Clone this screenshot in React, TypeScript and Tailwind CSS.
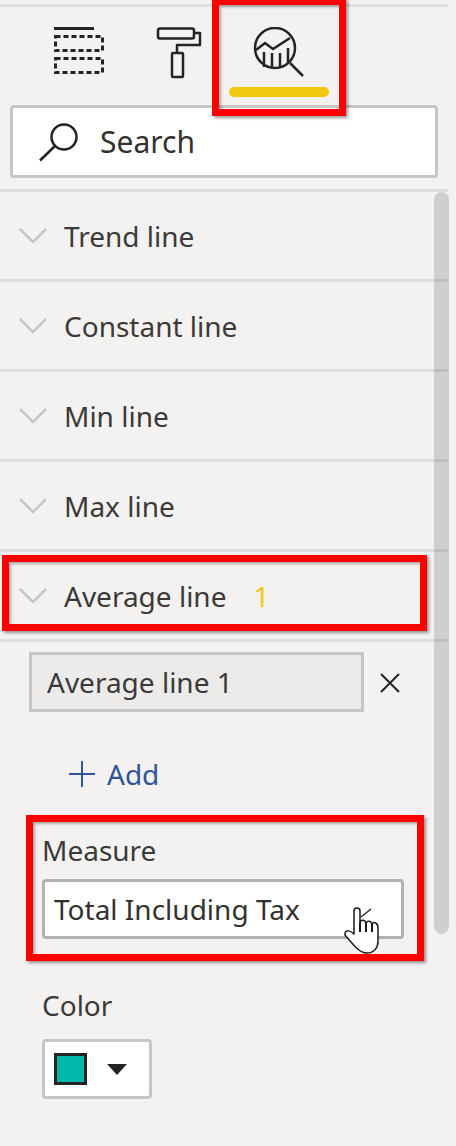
const font = { fontFamily: '"Noto Sans", "Open Sans", sans-serif' };

function Chevron() {
  return (
    <svg width="30" height="18" viewBox="0 0 30 18" fill="none" stroke="#c8c6c4" strokeWidth="2.5" className="shrink-0">
      <path d="M2 2 L15 15 L28 2" />
    </svg>
  );
}

function Row({ label, badge }: { label: string; badge?: string }) {
  return (
    <div className="h-[90px] flex items-center pl-[18px] border-b-[3px] border-[#e1dfdd] w-[448px]">
      <Chevron />
      <span className="ml-[16px] text-[28px] text-[#3b3a39] leading-none">{label}</span>
      {badge && <span className="ml-[27px] text-[28px] text-[#f2c811] leading-none">{badge}</span>}
    </div>
  );
}

function RedBox({ className }: { className: string }) {
  return <div className={"absolute border-[7px] border-[#ff0000] shadow-[2px_2px_3px_rgba(0,0,0,0.4),inset_2px_2px_3px_rgba(0,0,0,0.3)] " + className} />;
}

export default function App() {
  return (
    <div className="relative w-[456px] h-[1146px] overflow-hidden bg-[#f3f2f1]" style={font}>
      <div className="w-[448px] h-[192px] border-b-[3px] border-[#e1dfdd] flex flex-col">
        <div className="h-[3px] mt-[4px] bg-[#e1dfdd]" />
        <div className="flex h-[98px] pl-[54px] pt-[20px]">
          <svg width="50" height="50" viewBox="0 0 50 50" fill="none" stroke="#252423" strokeWidth="3" className="shrink-0">
            <path d="M0 1.5 H40" />
            <rect x="1.5" y="9.5" width="47" height="14" strokeDasharray="5 3" />
            <rect x="1.5" y="31.5" width="47" height="14" strokeDasharray="5 3" />
          </svg>
          <svg width="48" height="52" viewBox="0 0 48 52" fill="none" stroke="#252423" strokeWidth="2.5" strokeLinejoin="round" className="shrink-0 ml-[52px]">
            <rect x="2" y="1.5" width="36" height="10" rx="2" />
            <path d="M38 6 H44 V18 H21 V26" />
            <rect x="16" y="26" width="11" height="24" rx="1" />
          </svg>
          <svg width="52" height="52" viewBox="0 0 52 52" fill="none" stroke="#252423" strokeWidth="2.5" className="shrink-0 ml-[49px]">
            <circle cx="22" cy="21" r="20" />
            <path d="M3 23 L12 16 L20 22 L37 11" />
            <path d="M11 25 V40 M19 26 V41 M27 26 V41 M35 21 V36" />
            <path d="M37 36 L50 49" />
          </svg>
        </div>
        <div className="ml-[10px] w-[428px] h-[73px] bg-white border-[3px] border-[#c8c6c4] rounded-[4px] flex items-center pl-[26px]">
          <svg width="40" height="40" viewBox="0 0 40 40" fill="none" stroke="#252423" strokeWidth="2.5" className="shrink-0">
            <circle cx="25" cy="15" r="12.5" />
            <path d="M16 24 L1 38.5" />
          </svg>
          <span className="ml-[21px] text-[30px] text-[#323130] leading-none">Search</span>
        </div>
      </div>

      <Row label="Trend line" />
      <Row label="Constant line" />
      <Row label="Min line" />
      <Row label="Max line" />
      <Row label="Average line" badge="1" />

      <div className="pt-[10px] pl-[29px] flex items-center">
        <div className="w-[335px] h-[60px] border-[3px] border-[#c8c6c4] bg-[#edebe9] flex items-center pl-[15px] text-[28px] text-[#3b3a39] leading-none">
          Average line 1
        </div>
        <svg width="20" height="20" viewBox="0 0 20 20" fill="none" stroke="#252423" strokeWidth="2" className="ml-[16px] mt-[1px]">
          <path d="M1 1 L19 19 M19 1 L1 19" />
        </svg>
      </div>

      <div className="mt-[44px] ml-[69px] flex items-center h-[36px]">
        <svg width="26" height="26" viewBox="0 0 26 26" fill="none" stroke="#2f5597" strokeWidth="2">
          <path d="M13 0 V26 M0 13 H26" />
        </svg>
        <span className="ml-[12px] text-[28px] text-[#2f5597] leading-none">Add</span>
      </div>

      <div className="mt-[40px] ml-[42px] text-[28px] text-[#3b3a39] leading-[36px]">Measure</div>
      <div className="mt-[11px] ml-[42px] w-[362px] h-[60px] bg-white border-[3px] border-[#b3b0ad] rounded-[4px] flex items-center pl-[9px] text-[28px] text-[#323130] leading-none">
        Total Including Tax
      </div>

      <div className="mt-[48px] ml-[42px] text-[28px] text-[#3b3a39] leading-[36px]">Color</div>
      <div className="mt-[16px] ml-[42px] w-[110px] h-[60px] bg-white border-[3px] border-[#c8c6c4] rounded-[4px] flex items-center pl-[9px]">
        <div className="w-[33px] h-[32px] bg-[#01b8aa] border-[3px] border-[#252423]" />
        <svg width="20" height="11" viewBox="0 0 20 11" className="ml-[20px]">
          <path d="M0 0 H20 L10 11 Z" fill="#252423" />
        </svg>
      </div>

      {/* indicator under the active tab */}
      <div className="absolute left-[229px] top-[87px] w-[100px] h-[10px] rounded-full bg-[#f2c811]" />

      {/* scrollbar */}
      <div className="absolute left-[434px] top-[192px] w-[15px] h-[742px] rounded-full bg-[rgba(0,0,0,0.14)]" />

      {/* hand cursor with the dropdown chevron beneath it */}
      <svg width="60" height="70" viewBox="0 0 60 70" className="absolute left-[335px] top-[895px]" fill="none">
        <path d="M26 22 L36 14" stroke="#252423" strokeWidth="1.5" />
        <path
          d="M10 38 C11 35 15 35 19 39 V16 C19 12 25 12 25 16 V27 C27 24 30 25 31 28 C33 25 36 26 37 29 C39 26 43 28 43 33 V46 C43 53 39 58 32 58 C25 58 20 52 10 40 Z"
          fill="#fff" stroke="#1b1a19" strokeWidth="1.5" strokeLinejoin="round"
        />
        <path d="M25 27 V37 M31 28 V37 M37 29 V37" stroke="#1b1a19" strokeWidth="2" />
      </svg>

      <RedBox className="left-[212px] top-[-2px] w-[134px] h-[118px]" />
      <RedBox className="left-[2px] top-[555px] w-[425px] h-[76px]" />
      <RedBox className="left-[26px] top-[815px] w-[398px] h-[146px]" />
    </div>
  );
}
